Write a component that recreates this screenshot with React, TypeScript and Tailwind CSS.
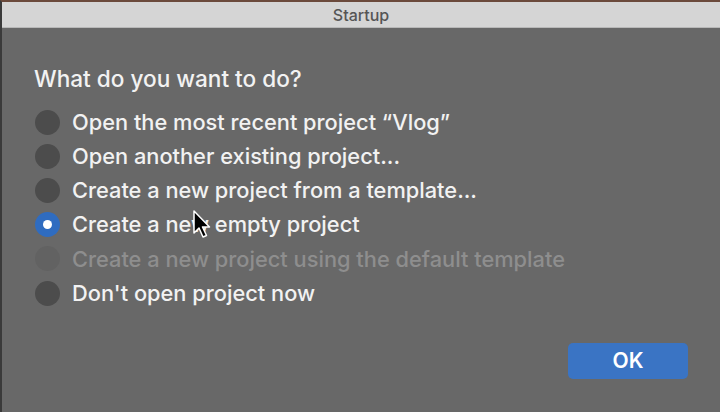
import { useState } from 'react';

const options = [
  { label: 'Open the most recent project “Vlog”', disabled: false },
  { label: 'Open another existing project...', disabled: false },
  { label: 'Create a new project from a template...', disabled: false },
  { label: 'Create a new empty project', disabled: false },
  { label: 'Create a new project using the default template', disabled: true },
  { label: "Don't open project now", disabled: false },
];

function Radio({ checked, disabled }: { checked: boolean; disabled: boolean }) {
  if (checked) {
    return (
      <span className="w-[25px] h-[25px] rounded-full bg-[#2f6cc0] flex items-center justify-center shrink-0">
        <span className="w-[9px] h-[9px] rounded-full bg-white" />
      </span>
    );
  }
  return (
    <span
      className={
        disabled
          ? 'w-[25px] h-[25px] rounded-full bg-[#626262] shrink-0'
          : 'w-[25px] h-[25px] rounded-full bg-[#4c4c4c] shrink-0'
      }
    />
  );
}

export default function App() {
  const [selected, setSelected] = useState(3);

  return (
    <div
      className="w-[720px] h-[412px] flex flex-col bg-[#686868] border-l-2 border-t-2 border-l-[#3a3a3a] border-t-[#6b4a3c] overflow-hidden relative"
      style={{ fontFamily: 'Inter, "Liberation Sans", sans-serif' }}
    >
      {/* Title bar */}
      <div className="h-[26px] bg-[#d5d5d5] border-b border-[#b8b8b8] flex items-center justify-center">
        <span className="text-[16px] font-medium text-[#555555]">Startup</span>
      </div>

      {/* Body */}
      <div className="flex-1 flex flex-col pl-[32px] pr-[32px] pt-[38px]">
        <p className="text-[22.6px] leading-[26px] font-medium text-[#f2f2f2]">What do you want to do?</p>

        <div className="flex flex-col mt-[13px] pl-[1px]">
          {options.map((opt, i) => (
            <button
              key={opt.label}
              disabled={opt.disabled}
              onClick={() => setSelected(i)}
              className="h-[34.2px] flex items-center gap-[12px] text-left"
            >
              <Radio checked={selected === i} disabled={opt.disabled} />
              <span
                className={
                  opt.disabled
                    ? 'text-[21.8px] font-medium text-[#8e8e8e] whitespace-nowrap'
                    : 'text-[21.8px] font-medium text-[#f2f2f2] whitespace-nowrap'
                }
              >
                {opt.label}
              </span>
            </button>
          ))}
        </div>

        <div className="flex justify-end mt-[33px]">
          <button className="w-[120px] h-[36px] rounded-[5px] bg-[#3a74c4] text-white text-[21px] font-semibold">
            OK
          </button>
        </div>
      </div>

      {/* Mouse pointer */}
      <svg className="absolute left-[191px] top-[208px]" width="20" height="30" viewBox="0 0 20 30">
        <path d="M1 1 L1 23 L6 18 L10 27 L13.5 25.5 L9.5 17 L16.5 17 Z" fill="#000" stroke="#fff" strokeWidth="1.5" strokeLinejoin="round" />
      </svg>
    </div>
  );
}
